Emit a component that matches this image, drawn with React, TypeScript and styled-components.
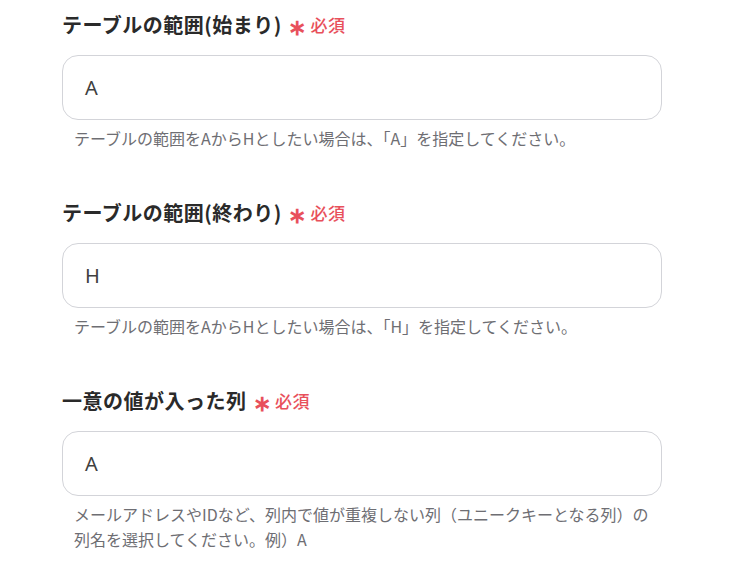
import React from "react";
import styled, { createGlobalStyle } from "styled-components";

const Global = createGlobalStyle`
  html, body { margin: 0; padding: 0; background: #ffffff; }
  body { font-family: "Noto Sans CJK JP", "Noto Sans", sans-serif; }
`;

const Page = styled.div`
  display: flex;
  flex-direction: column;
  gap: 46px;
  padding: 9px 0 0 62px;
  width: 600px;
`;

const Field = styled.div`
  display: flex;
  flex-direction: column;
`;

const Label = styled.div`
  display: flex;
  align-items: center;
  gap: 6px;
  height: 30px;
  margin-bottom: 16px;
  font-size: 20px;
  font-weight: 700;
  letter-spacing: 0.5px;
  color: #2a2a2a;
`;

const Required = styled.span`
  display: flex;
  align-items: center;
  gap: 4px;
  font-size: 17px;
  font-weight: 500;
  letter-spacing: 0.5px;
  color: #e8505b;
  margin-top: 1px;
`;

const Star = styled.span`
  font-size: 22px;
  font-weight: 700;
  line-height: 1;
  margin-top: 1px;
`;

const Input = styled.div`
  box-sizing: border-box;
  height: 65px;
  border: 1px solid #d3d4d9;
  border-radius: 16px;
  display: flex;
  align-items: center;
  padding-left: 22px;
  font-family: "Noto Sans", "Noto Sans CJK JP", sans-serif;
  font-size: 20px;
  color: #404040;
`;

const Help = styled.div`
  margin-top: 6px;
  padding: 0 12px;
  font-size: 16px;
  line-height: 25px;
  color: #6e6e73;
`;

const fields = [
  {
    label: "テーブルの範囲(始まり)",
    value: "A",
    help: "テーブルの範囲をAからHとしたい場合は、「A」を指定してください。",
  },
  {
    label: "テーブルの範囲(終わり)",
    value: "H",
    help: "テーブルの範囲をAからHとしたい場合は、「H」を指定してください。",
  },
  {
    label: "一意の値が入った列",
    value: "A",
    help: "メールアドレスやIDなど、列内で値が重複しない列（ユニークキーとなる列）の列名を選択してください。例）A",
  },
];

export default function App() {
  return (
    <>
      <Global />
      <Page>
        {fields.map((f, i) => (
          <Field key={i}>
            <Label>
              {f.label}
              <Required>
                <Star>∗</Star>必須
              </Required>
            </Label>
            <Input>{f.value}</Input>
            <Help>{f.help}</Help>
          </Field>
        ))}
      </Page>
    </>
  );
}
